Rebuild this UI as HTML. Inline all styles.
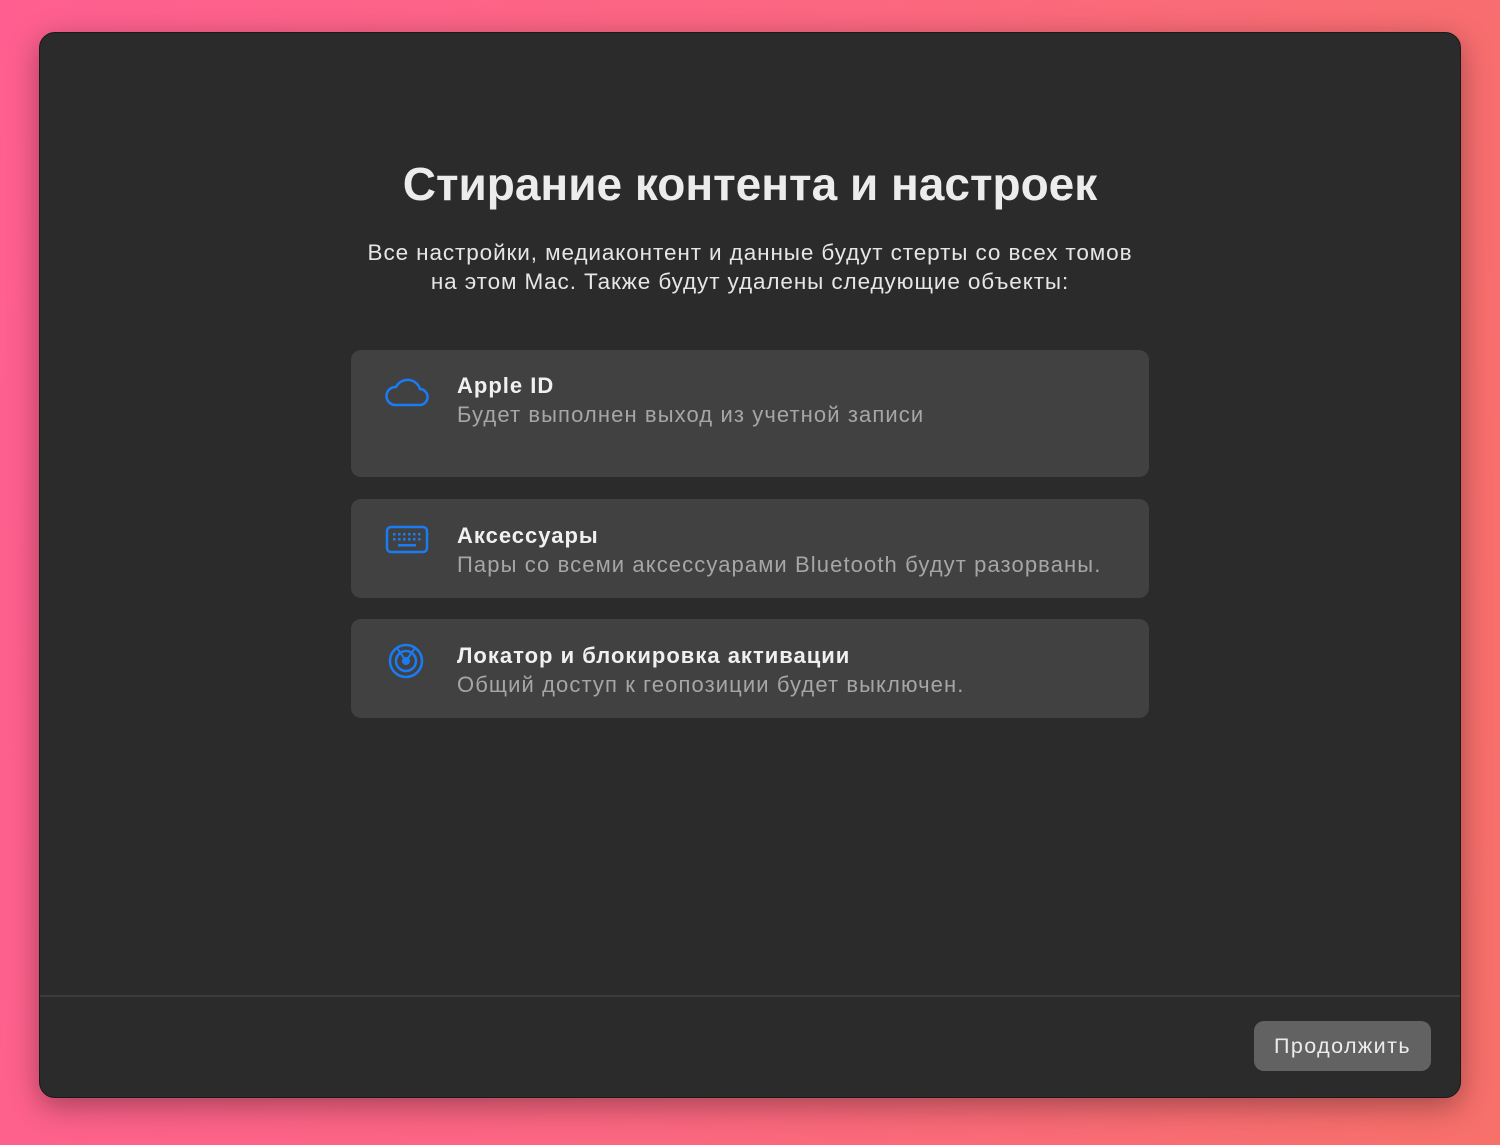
<!DOCTYPE html>
<html><head><meta charset="utf-8"><style>
*{margin:0;padding:0;box-sizing:border-box}
body{width:1500px;height:1145px;overflow:hidden;background:linear-gradient(100deg,#ff5f90 0%,#fb6780 50%,#f7706a 100%);font-family:"Liberation Sans","DejaVu Sans",sans-serif;position:relative}
.win{position:absolute;left:39px;top:32px;width:1422px;height:1066px;background:#2b2b2b;border-radius:16px;border:1px solid #1a1a1a;box-shadow:0 8px 30px rgba(0,0,0,.35)}
h1{position:absolute;top:124px;left:0;width:100%;text-align:center;color:#ececec;font-size:46px;font-weight:bold;letter-spacing:0}
.sub{position:absolute;top:205px;left:0;width:100%;text-align:center;color:#e6e6e6;font-size:22.5px;line-height:29px;letter-spacing:0.9px}
.card{position:absolute;left:311px;width:798px;background:#414141;border-radius:10px}
.card svg{position:absolute;left:34px}
.t{position:absolute;left:106px;color:#f0f0f0;font-weight:bold;font-size:22px;letter-spacing:1px}
.d{position:absolute;left:106px;color:#a6a6a6;font-size:22px;letter-spacing:1.1px}
.div{position:absolute;left:0;right:0;top:962px;height:2px;background:#3c3c3c}
.btn{position:absolute;left:1214px;top:988px;width:177px;height:50px;border-radius:10px;background:#626262;color:#ececec;font-size:21.5px;text-align:center;line-height:50px;letter-spacing:1.4px}
</style></head><body>
<div class="win">
<h1>Стирание контента и настроек</h1>
<div class="sub">Все настройки, медиаконтент и данные будут стерты со всех томов<br>на этом Mac. Также будут удалены следующие объекты:</div>
<div class="card" style="top:317px;height:127px">
<svg style="top:25px" width="44" height="34" viewBox="0 0 44 34"><path d="M10 30 H34 A8 8 0 0 0 35 14 A13 13 0 0 0 11 12 A9 9 0 0 0 10 30 Z" fill="none" stroke="#1a7cf5" stroke-width="2.5"/></svg>
<div class="t" style="top:23px">Apple ID</div>
<div class="d" style="top:52px">Будет выполнен выход из учетной записи</div>
</div>
<div class="card" style="top:466px;height:99px">
<svg style="top:26px" width="44" height="30" viewBox="0 0 44 30"><rect x="2" y="2" width="40" height="25" rx="4" fill="none" stroke="#1a7cf5" stroke-width="2.5"/><g fill="#1a7cf5"><rect x="8" y="8" width="2.5" height="2.5"/><rect x="13" y="8" width="2.5" height="2.5"/><rect x="18" y="8" width="2.5" height="2.5"/><rect x="23" y="8" width="2.5" height="2.5"/><rect x="28" y="8" width="2.5" height="2.5"/><rect x="33" y="8" width="2.5" height="2.5"/><rect x="8" y="13" width="2.5" height="2.5"/><rect x="13" y="13" width="2.5" height="2.5"/><rect x="18" y="13" width="2.5" height="2.5"/><rect x="23" y="13" width="2.5" height="2.5"/><rect x="28" y="13" width="2.5" height="2.5"/><rect x="33" y="13" width="2.5" height="2.5"/><rect x="13" y="19" width="18" height="2.5"/></g></svg>
<div class="t" style="top:24px">Аксессуары</div>
<div class="d" style="top:53px">Пары со всеми аксессуарами Bluetooth будут разорваны.</div>
</div>
<div class="card" style="top:586px;height:99px">
<svg style="top:23px;left:36px" width="38" height="38" viewBox="0 0 38 38"><circle cx="19" cy="19" r="16" fill="none" stroke="#1a7cf5" stroke-width="2.5"/><circle cx="19" cy="19" r="10" fill="none" stroke="#1a7cf5" stroke-width="2.5"/><circle cx="19" cy="19" r="4" fill="#1a7cf5"/><path d="M10 6 L19 19 L28 6" fill="none" stroke="#1a7cf5" stroke-width="2"/></svg>
<div class="t" style="top:24px">Локатор и блокировка активации</div>
<div class="d" style="top:53px">Общий доступ к геопозиции будет выключен.</div>
</div>
<div class="div"></div>
<div class="btn">Продолжить</div>
</div>
</body></html>
